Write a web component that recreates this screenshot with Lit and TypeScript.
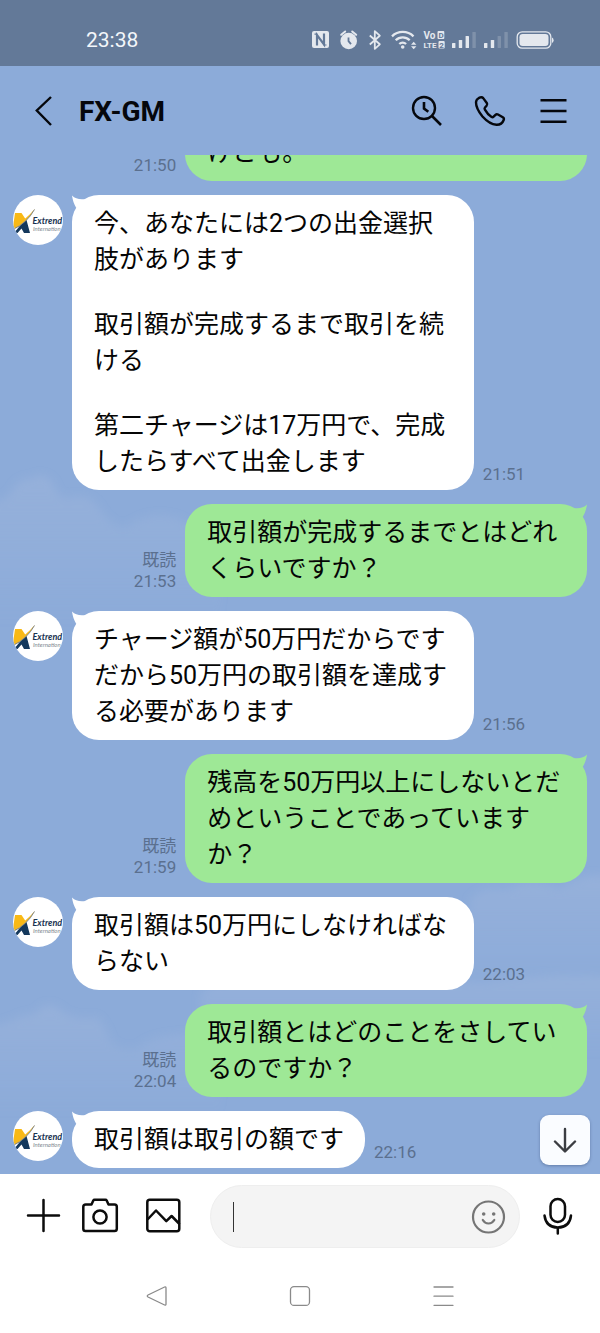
import { LitElement, html, css, svg, nothing } from "lit";
import { customElement, property } from "lit/decorators.js";

interface Message {
  own: boolean;
  paragraphs: string[];
  time: string;
  read?: boolean;
  full?: boolean;
}

const MESSAGES: Message[] = [
  { own: true, paragraphs: ["けども。"], time: "21:50", full: true },
  {
    own: false,
    paragraphs: [
      "今、あなたには2つの出金選択肢があります",
      "取引額が完成するまで取引を続ける",
      "第二チャージは17万円で、完成したらすべて出金します",
    ],
    time: "21:51",
  },
  { own: true, paragraphs: ["取引額が完成するまでとはどれくらいですか？"], time: "21:53", read: true },
  {
    own: false,
    paragraphs: ["チャージ額が50万円だからです\nだから50万円の取引額を達成する必要があります"],
    time: "21:56",
  },
  { own: true, paragraphs: ["残高を50万円以上にしないとだめということであっていますか？"], time: "21:59", read: true },
  { own: false, paragraphs: ["取引額は50万円にしなければならない"], time: "22:03" },
  { own: true, paragraphs: ["取引額とはどのことをさしているのですか？"], time: "22:04", read: true },
  { own: false, paragraphs: ["取引額は取引の額です"], time: "22:16" },
];

@customElement("status-bar")
class StatusBar extends LitElement {
  static styles = css`
    :host {
      display: flex;
      align-items: center;
      justify-content: space-between;
      box-sizing: border-box;
      height: 66px;
      padding: 14px 42px 0 86px;
      background: #637998;
      color: #f3f6fa;
      font-size: 21px;
      line-height: 24px;
    }
    .icons {
      display: block;
      width: 248px;
      height: 24px;
    }
    .tiny {
      font: 700 10px/1 "Roboto", sans-serif;
    }
    .mini {
      font: 700 8px/1 "Roboto", sans-serif;
    }
  `;

  private bars(x: number, strong: number) {
    const tops = [43, 40, 36, 32];
    return tops.map(
      (y, i) => svg`<rect x=${x + i * 6.8} y=${y} width="3.4" height=${48 - y} rx="0.6"
        fill="#e4e8ee" opacity=${i < strong ? 1 : 0.22}></rect>`
    );
  }

  render() {
    return html`
      <time>23:38</time>
      <svg class="icons" viewBox="310 28 248 24" fill="none" role="img" aria-label="status">
        <rect x="312" y="31" width="17" height="17" rx="2" fill="#e4e8ee" />
        <path d="M317 45.500V35l7 9.500V33.500" stroke="#637998" stroke-width="2.200" />
        <path d="M314.500 34.200h3M323.500 45h3" stroke="#637998" stroke-width="1.200" />
        <circle cx="348.700" cy="41" r="8.300" fill="#e4e8ee" />
        <path d="M341.200 34.800l4-3.300M356.200 34.800l-4-3.300" stroke="#e4e8ee" stroke-width="2" stroke-linecap="round" />
        <path d="M348.500 37.500v3.700l2.500 3" stroke="#637998" stroke-width="1.800" />
        <path d="M369.800 35.500l10 8.800-5 4.500V31.200l5 4.500-10 8.800" stroke="#e4e8ee" stroke-width="1.800" stroke-linejoin="round" />
        <path d="M392 36.300a15.500 15.500 0 0 1 21.500 0M395.700 40.300a10 10 0 0 1 14 0M399.300 44a5 5 0 0 1 6.800 0" stroke="#e4e8ee" stroke-width="2.300" />
        <circle cx="402.700" cy="47" r="1.800" fill="#e4e8ee" />
        <path d="M411 44.700l2.700-3 2.700 3zM411 46.300l2.700 3 2.700-3z" fill="#e4e8ee" />
        <text class="tiny" x="423.500" y="38.700" fill="#e4e8ee">Vo</text>
        <text class="mini" x="423.500" y="48" fill="#e4e8ee">LTE</text>
        <rect x="437.500" y="31" width="6.800" height="8" rx="1" fill="#e4e8ee" />
        <rect x="438.500" y="41" width="6.200" height="7.500" rx="1" fill="#e4e8ee" />
        <text class="mini" x="438.500" y="38" fill="#637998">D</text>
        <text class="mini" x="439.200" y="47.800" fill="#637998">2</text>
        ${this.bars(452, 3)} ${this.bars(484, 2)}
        <rect x="517.200" y="31.800" width="33.600" height="16.400" rx="5" stroke="#e4e8ee" stroke-width="1.300" />
        <rect x="519.500" y="34" width="29" height="12" rx="3.200" fill="#e4e8ee" />
        <path d="M552 37.500Q553.600 38.200 553.600 40.200T552 43z" fill="#e4e8ee" />
      </svg>
    `;
  }
}

@customElement("chat-header")
class ChatHeader extends LitElement {
  static styles = css`
    :host {
      display: flex;
      align-items: center;
      box-sizing: border-box;
      height: 89px;
      padding: 0 31px 0 27px;
      background: #8cabd9;
      color: #05070c;
    }
    h1 {
      flex: 1;
      margin: 0 0 0 20px;
      padding-top: 2px;
      font-size: 28px;
      line-height: 32px;
      font-weight: 700;
    }
    nav {
      display: flex;
      gap: 31px;
    }
    button {
      display: block;
      width: 32px;
      height: 32px;
      padding: 0;
      border: 0;
      background: none;
      color: inherit;
    }
    svg {
      display: block;
      width: 32px;
      height: 32px;
      fill: none;
      stroke: currentColor;
      stroke-width: 2.4;
    }
  `;

  render() {
    return html`
      <button aria-label="戻る">
        <svg viewBox="0 0 32 32"><path d="M24 2L9.800 15.500 24 30" /></svg>
      </button>
      <h1>FX-GM</h1>
      <nav>
        <button aria-label="検索">
          <svg viewBox="0 0 32 32">
            <circle cx="13" cy="13" r="11" />
            <path d="M21 21l9 9M13 7V13.500l4.300 3.300" stroke-width="2.600" />
          </svg>
        </button>
        <button aria-label="通話">
          <svg viewBox="0 0 32 32" stroke-linejoin="round">
            <path d="M4.600 3.200L6.300 2.400Q8 1.700 9.200 3.100L12.800 8Q13.800 9.500 12.600 10.800L11 12.500Q10.200 13.500 10.900 14.700Q13.600 19.600 17.600 22Q18.700 22.600 19.600 21.700L21.500 19.800Q22.600 18.700 24 19.500L28.800 22.300Q30.400 23.300 29.700 25Q27.800 30 22.500 29.800Q15.500 29.300 8.500 21.500Q2 13.500 2 7.500Q2 4.500 4.600 3.200Z" />
          </svg>
        </button>
        <button aria-label="メニュー">
          <svg viewBox="0 0 32 32"><path d="M3.500 5.200h26M3.500 16h26M3.500 26.800h26" /></svg>
        </button>
      </nav>
    `;
  }
}

@customElement("sender-avatar")
class SenderAvatar extends LitElement {
  static styles = css`
    :host {
      display: block;
      width: 50px;
      height: 50px;
      border-radius: 50%;
      overflow: hidden;
      background: #fff;
    }
    svg {
      display: block;
      width: 50px;
      height: 50px;
    }
    .name {
      font: italic 700 9px "Lato", sans-serif;
    }
    .sub {
      font: italic 400 6px "Lato", sans-serif;
    }
  `;

  render() {
    return html`
      <svg viewBox="0 0 50 50" role="img" aria-label="Extrend International">
        <path d="M2 18h6.500l4 6-5 5L0 32z" fill="#f9b915" />
        <path d="M8 29.500l5.500-4.500L17 38h-6L8.500 33.500 4.500 38H1z" fill="#14385c" />
        <path d="M0 31.500Q12 26 22 13.500Q14 28 0 34.500z" fill="#f5b81d" />
        <path d="M0 34.500Q14 28 21.500 14.500" fill="none" stroke="#6f7c88" stroke-width="0.900" />
        <text class="name" x="19.500" y="29" fill="#183250">Extrend</text>
        <text class="sub" x="20" y="36" fill="#808891">Internation</text>
      </svg>
    `;
  }
}

@customElement("chat-message")
class ChatMessage extends LitElement {
  @property({ attribute: false }) message!: Message;

  static styles = css`
    :host {
      display: block;
    }
    .row {
      display: flex;
      align-items: flex-start;
      gap: 9px;
      padding: 0 13px;
    }
    .own {
      flex-direction: row-reverse;
    }
    .bubble {
      position: relative;
      box-sizing: border-box;
      max-width: 70%;
      padding: 11px 21px 10px 22px;
      border-radius: 27px;
      background: #fff;
      color: #050505;
      font-size: 25px;
      line-height: 36px;
    }
    .own .bubble {
      background: #9ee896;
    }
    .full {
      width: 70%;
    }
    p {
      margin: 0;
      white-space: pre-line;
    }
    p + p {
      margin-top: 29px;
    }
    .tail {
      position: absolute;
      top: 0;
      left: 0;
      width: 16px;
      height: 16px;
      fill: #fff;
    }
    .own .tail {
      left: auto;
      right: 0;
      transform: scaleX(-1);
      fill: #9ee896;
    }
    .meta {
      display: flex;
      flex-direction: column;
      align-self: flex-end;
      padding-bottom: 5px;
      color: #5b708f;
      font-size: 17px;
      line-height: 21px;
    }
    .own .meta {
      align-items: flex-end;
    }
  `;

  render() {
    const m = this.message;
    return html`
      <div class="row ${m.own ? "own" : ""}">
        ${m.own ? nothing : html`<sender-avatar></sender-avatar>`}
        <div class="bubble ${m.full ? "full" : ""}">
          <svg class="tail" viewBox="0 0 16 16" aria-hidden="true">
            <path d="M0 0.500C0.600 5 2 9 4 12.500L7 14L16 5L12.500 4.200C7 4.800 3 3.500 0 0.500Z" />
          </svg>
          ${m.paragraphs.map((text) => html`<p>${text}</p>`)}
        </div>
        <div class="meta">
          ${m.read ? html`<span>既読</span>` : nothing}
          <time>${m.time}</time>
        </div>
      </div>
    `;
  }
}

@customElement("chat-composer")
class ChatComposer extends LitElement {
  static styles = css`
    :host {
      display: flex;
      align-items: center;
      gap: 20px;
      padding: 11px 20px 11px 22px;
      background: #fff;
      color: #0c0c0c;
    }
    button {
      display: block;
      flex: none;
      padding: 0;
      border: 0;
      background: none;
      color: inherit;
    }
    svg {
      display: block;
      width: 40px;
      height: 40px;
      fill: none;
      stroke: currentColor;
      stroke-width: 2.5;
      stroke-linecap: round;
      stroke-linejoin: round;
    }
    .field {
      display: flex;
      flex: 1;
      align-items: center;
      box-sizing: border-box;
      min-width: 0;
      height: 63px;
      margin-left: 8px;
      padding: 0 12px 0 22px;
      border: 1px solid #eeeeee;
      border-radius: 32px;
      background: #f4f4f4;
    }
    .field::before {
      content: "";
      width: 1px;
      height: 30px;
      background: #333;
    }
    input {
      flex: 1;
      min-width: 0;
      padding: 0;
      border: 0;
      outline: 0;
      background: none;
      font: inherit;
      font-size: 25px;
    }
    .emoji {
      color: #757575;
    }
  `;

  render() {
    return html`
      <button aria-label="追加">
        <svg viewBox="0 0 40 40"><path d="M6 18.500h31M21.500 3v31" /></svg>
      </button>
      <button aria-label="カメラ">
        <svg viewBox="0 0 40 40">
          <path d="M3.800 7.500H9.500L11.300 3.600Q11.700 2.800 12.600 2.800H23.400Q24.300 2.800 24.700 3.600L26.500 7.500H32.500Q34.800 7.500 34.800 9.800V31.800Q34.800 34.100 32.500 34.100H3.500Q1.300 34.100 1.300 31.800V9.800Q1.300 7.500 3.800 7.500Z" />
          <circle cx="18" cy="20" r="6.600" />
        </svg>
      </button>
      <button aria-label="写真">
        <svg viewBox="0 0 40 40">
          <rect x="5.300" y="2.800" width="32" height="31.500" rx="2.500" />
          <path d="M6 22l8-8.500 10.300 10.700 5.300-5.200L37 26.500" />
        </svg>
      </button>
      <div class="field">
        <input type="text" aria-label="メッセージを入力" />
        <button class="emoji" aria-label="スタンプ">
          <svg viewBox="0 0 40 40">
            <circle cx="21.500" cy="20" r="15.500" stroke-width="2.200" />
            <circle cx="16.700" cy="17" r="1.800" fill="currentColor" stroke="none" />
            <circle cx="26.700" cy="17" r="1.800" fill="currentColor" stroke="none" />
            <path d="M15.800 23Q17.800 26.500 21.500 26.500T27.300 23" stroke-width="2.200" />
          </svg>
        </button>
      </div>
      <button aria-label="音声">
        <svg viewBox="0 0 40 40">
          <rect x="10.500" y="2" width="14.500" height="23" rx="7.250" />
          <path d="M4.500 18.500Q6 30.500 17.800 30.500T31 18.500M17.800 30.500V36.500" />
        </svg>
      </button>
    `;
  }
}

@customElement("system-nav")
class SystemNav extends LitElement {
  static styles = css`
    :host {
      display: block;
      background: #fff;
    }
    nav {
      display: grid;
      grid-template-columns: repeat(3, 1fr);
      place-items: center;
      width: 72%;
      height: 74px;
      margin: 0 auto;
    }
    button {
      padding: 0;
      border: 0;
      background: none;
      color: #8a8a8a;
    }
    svg {
      display: block;
      width: 24px;
      height: 24px;
      fill: none;
      stroke: currentColor;
      stroke-width: 1.3;
      stroke-linecap: round;
      stroke-linejoin: round;
    }
  `;

  render() {
    return html`
      <nav>
        <button aria-label="戻る">
          <svg viewBox="0 0 24 24">
            <path d="M20.600 3Q22 2.500 22 4V20Q22 21.500 20.600 21L4 13Q2.500 12 4 11Z" />
          </svg>
        </button>
        <button aria-label="ホーム">
          <svg viewBox="0 0 24 24"><rect x="2.500" y="2.700" width="19" height="18.700" rx="3.500" /></svg>
        </button>
        <button aria-label="履歴">
          <svg viewBox="0 0 24 24"><path d="M2 3h19M2 12.200h19M2 21.300h19" /></svg>
        </button>
      </nav>
    `;
  }
}

@customElement("app-root")
class AppRoot extends LitElement {
  static styles = css`
    :host {
      display: flex;
      flex-direction: column;
      height: 100vh;
      overflow: hidden;
      background: #fff;
      font-family: "Roboto", "Noto Sans CJK JP", sans-serif;
    }
    main {
      position: relative;
      display: flex;
      flex: 1;
      flex-direction: column;
      justify-content: flex-end;
      min-height: 0;
      overflow: hidden;
      background: #8cabd9;
    }
    .sky {
      position: absolute;
      inset: 0;
      width: 100%;
      height: 100%;
    }
    .list {
      position: relative;
      display: flex;
      flex-direction: column;
      gap: 14px;
      padding-bottom: 6px;
    }
    .latest {
      position: absolute;
      right: 10px;
      bottom: 9px;
      display: grid;
      place-items: center;
      width: 50px;
      height: 50px;
      padding: 0;
      border: 0;
      border-radius: 9px;
      background: #fafcff;
      box-shadow: 0 1px 3px rgba(40, 60, 100, 0.4);
    }
    .latest svg {
      width: 26px;
      height: 26px;
    }
  `;

  render() {
    return html`
      <status-bar></status-bar>
      <chat-header></chat-header>
      <main>
        <svg class="sky" viewBox="0 0 600 1019" preserveAspectRatio="none" aria-hidden="true">
          <defs>
            <filter id="soft"><feGaussianBlur stdDeviation="4" /></filter>
            <linearGradient id="mist" x1="0" y1="0" x2="0" y2="1">
              <stop offset="0" stop-color="#a4b9dd" stop-opacity="0.4" />
              <stop offset="1" stop-color="#a4b9dd" stop-opacity="0" />
            </linearGradient>
          </defs>
          <g fill="url(#mist)" filter="url(#soft)">
            <path d="M-20 352Q10 345 14 332Q22 322 32 324Q40 316 52 326Q60 348 72 342Q92 338 102 358Q116 374 126 372Q150 354 180 364L220 390V470H-20Z" />
            <path d="M-20 875Q14 866 24 860Q34 862 42 852Q52 846 64 858Q80 866 96 862Q106 870 110 886Q124 898 140 892Q154 876 220 880V960H-20Z" />
            <path d="M200 840Q214 826 244 822Q330 812 480 828Q540 818 620 822V900H200Z" />
            <path d="M470 745Q484 730 506 736Q530 720 560 734Q580 716 620 722V830H470Z" />
          </g>
        </svg>
        <div class="list">
          ${MESSAGES.map((m) => html`<chat-message .message=${m}></chat-message>`)}
        </div>
        <button class="latest" aria-label="最新のメッセージへ">
          <svg viewBox="0 0 26 26" fill="none" stroke="#3b3d42" stroke-width="2.400" stroke-linecap="round" stroke-linejoin="round">
            <path d="M13 2v22M3 14.500l10 10 10-10" />
          </svg>
        </button>
      </main>
      <chat-composer></chat-composer>
      <system-nav></system-nav>
    `;
  }
}
